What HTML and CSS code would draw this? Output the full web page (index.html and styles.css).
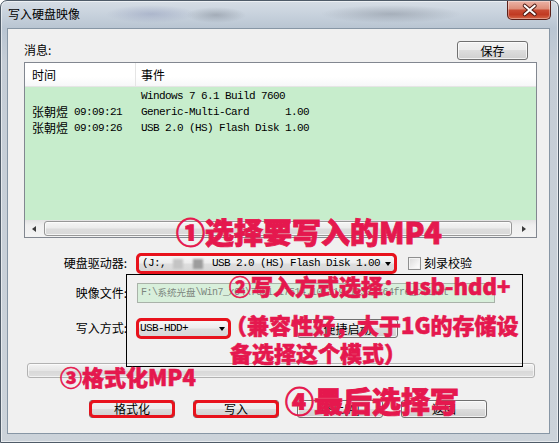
FILE: index.html
```html
<!DOCTYPE html>
<html lang="zh-CN">
<head>
<meta charset="utf-8">
<title>写入硬盘映像</title>
<link rel="stylesheet" href="styles.css">
</head>
<body>
<div class="window">
  <div class="titlebar">
    <span class="title">写入硬盘映像</span>
    <div class="close">
      <svg width="44" height="18" viewBox="0 0 44 18">
        <path d="M17.5 4.5 L28 13.5 M28 4.5 L17.5 13.5" stroke="#4a1710" stroke-width="4.2" stroke-linecap="round"/>
        <path d="M17.5 4.5 L28 13.5 M28 4.5 L17.5 13.5" stroke="#ffffff" stroke-width="2.2" stroke-linecap="round"/>
      </svg>
    </div>
  </div>
  <div class="client">
    <div class="msg-row">
      <span class="msg-label">消息:</span>
      <button class="btn btn-save">保存</button>
    </div>
    <div class="listview">
      <div class="lv-head">
        <div class="lv-c1">时间</div>
        <div class="lv-c2">事件</div>
      </div>
      <div class="lv-body">
        <div class="lv-row"><span class="lv-c1"></span><span class="lv-c2 mono">Windows 7 6.1 Build 7600</span></div>
        <div class="lv-row"><span class="lv-c1"><span class="cjk">张朝煜</span><span class="mono"> 09:09:21</span></span><span class="lv-c2 mono">Generic-Multi-Card      1.00</span></div>
        <div class="lv-row"><span class="lv-c1"><span class="cjk">张朝煜</span><span class="mono"> 09:09:26</span></span><span class="lv-c2 mono">USB 2.0 (HS) Flash Disk 1.00</span></div>
      </div>
      <div class="hscroll">
        <div class="sb-btn sb-left"><i class="tri-l"></i></div>
        <div class="sb-thumb"></div>
        <div class="sb-btn sb-right"><i class="tri-r"></i></div>
      </div>
    </div>
    <div class="frow r1">
      <span class="lbl">硬盘驱动器:</span>
      <div class="combo combo-drive hl">
        <span class="mono">(J:, </span><i class="blur b1"></i><i class="blur b2"></i><span class="mono drive-name">USB 2.0 (HS) Flash Disk 1.00</span>
        <i class="arrow"></i>
      </div>
      <div class="check"><i class="box"></i><span>刻录校验</span></div>
    </div>
    <div class="frow r2">
      <span class="lbl">映像文件:</span>
      <div class="field"><span class="mono-s">F:\</span><span class="cjk-s">系统光盘</span><span class="mono-s">\Win7_x64\7601.17514.101119-1233_x64fre_client</span></div>
    </div>
    <div class="frow r3">
      <span class="lbl">写入方式:</span>
      <div class="combo combo-mode hl">
        <span class="mono">USB-HDD+</span>
        <i class="arrow"></i>
      </div>
      <button class="btn btn-quick">便捷启动</button>
    </div>
    <div class="progress"></div>
    <div class="buttons">
      <button class="btn hl hl-btn">格式化</button>
      <button class="btn hl hl-btn">写入</button>
      <button class="btn">终止[A]</button>
      <button class="btn">返回</button>
    </div>
  </div>

  <div class="blackbox"></div>
  <div class="annot a1">①选择要写入的MP4</div>
  <div class="annot a2">②写入方式选择：usb-hdd+</div>
  <div class="annot a3">（兼容性好，大于1G的存储设</div>
  <div class="annot a4">备选择这个模式）</div>
  <div class="annot a5">③格式化MP4</div>
  <div class="annot a6">④最后选择写</div>
</div>
</body>
</html>
```
FILE: styles.css
```css
* { box-sizing: border-box; margin: 0; padding: 0; }
html, body { width: 559px; height: 443px; overflow: hidden; }
body {
  background: #ffffff;
  font-family: "Noto Sans CJK SC", "Liberation Sans", sans-serif;
  font-size: 12px;
  color: #000;
  line-height: 1.2;
}

.window {
  position: relative;
  width: 559px;
  height: 443px;
  border: 1px solid #4f5b68;
  border-radius: 7px 7px 0 0;
  padding: 0 8px 8px 6px;
  display: flex;
  flex-direction: column;
  background:
    radial-gradient(ellipse 45px 9px at 150px 13px, rgba(150, 160, 190, .55), transparent),
    radial-gradient(ellipse 30px 8px at 215px 14px, rgba(120, 128, 140, .45), transparent),
    radial-gradient(ellipse 70px 9px at 390px 13px, rgba(125, 133, 145, .45), transparent),
    linear-gradient(180deg, #d6dde5 0px, #c8d2dd 13px, #b9c5d2 27px, #c5cdd6 60px, #ccd3da 100%);
  box-shadow: inset 0 0 0 1px rgba(255, 255, 255, .55);
}

.titlebar {
  height: 27px;
  display: flex;
  justify-content: space-between;
  align-items: flex-start;
}
.title { padding: 5px 0 0 1px; line-height: 16px; font-size: 12px; }
.close {
  width: 44px;
  height: 19px;
  margin-right: -1px;
  border: 1px solid #5b2019;
  border-top: none;
  border-radius: 0 0 5px 5px;
  background: linear-gradient(180deg, #ebb3a6 0%, #de8f7b 42%, #c94a32 52%, #c13a22 75%, #d46648 100%);
  box-shadow: inset 0 0 0 1px rgba(255, 255, 255, .35);
  display: flex;
}
.close svg { display: block; }

.client {
  flex: 1;
  background: #f0f0f0;
  border: 1px solid #8796a5;
  display: flex;
  flex-direction: column;
}

.msg-row {
  display: flex;
  align-items: center;
  justify-content: space-between;
  height: 19px;
  margin: 12px 21px 0 16px;
}

.btn {
  font: 12px "Noto Sans CJK SC", "Liberation Sans", sans-serif;
  color: #000;
  border: 1px solid #707070;
  border-radius: 3px;
  background: linear-gradient(180deg, #f2f2f2 0%, #ebebeb 49%, #dddddd 50%, #cfcfcf 100%);
  box-shadow: inset 0 0 0 1px rgba(255, 255, 255, .7);
  display: flex;
  align-items: center;
  justify-content: center;
  line-height: 1;
}
.btn-save { width: 71px; height: 19px; }

.listview {
  margin: 2px 12px 0 16px;
  height: 176px;
  border: 1px solid #828790;
  background: #fff;
  display: flex;
  flex-direction: column;
}
.lv-head {
  height: 24px;
  display: flex;
  border-bottom: 1px solid #e5e5e5;
  background: linear-gradient(180deg, #ffffff 0%, #ffffff 60%, #f6f7f8 100%);
}
.lv-head > div { line-height: 23px; }
.lv-head .lv-c1 { width: 111px; padding-left: 7px; border-right: 1px solid #e5e5e5; }
.lv-head .lv-c2 { padding-left: 5px; }

.lv-body { flex: 1; background: #c7edcc; padding-top: 1px; }
.lv-row { display: flex; height: 16px; line-height: 16px; white-space: pre; }
.lv-row .lv-c1 { width: 111px; padding-left: 7px; display: flex; align-items: center; }
.lv-row .lv-c2 { padding-left: 5px; }

.mono {
  font-family: "Liberation Mono", "Noto Sans CJK SC", monospace;
  font-size: 11px;
  letter-spacing: -0.6px;
  white-space: pre;
}
.cjk { font-size: 12px; letter-spacing: 0; }

.hscroll {
  height: 17px;
  display: flex;
  background: linear-gradient(180deg, #e2e2e2 0%, #efefef 30%, #f3f3f3 100%);
}
.sb-btn { display: flex; align-items: center; justify-content: center; }
.sb-left { width: 18px; }
.sb-right { width: 24px; }
.sb-thumb {
  flex: 1;
  margin: 1px 0 1px 1px;
  border: 1px solid #979797;
  border-radius: 3px;
  background: linear-gradient(180deg, #f5f5f5 0%, #ececec 45%, #dcdcdc 55%, #d9d9d9 100%);
  box-shadow: inset 0 0 0 1px rgba(255, 255, 255, .7);
}
.tri-l { width: 0; height: 0; border-top: 3.5px solid transparent; border-bottom: 3.5px solid transparent; border-right: 4px solid #3a3a3a; }
.tri-r { width: 0; height: 0; border-top: 3.5px solid transparent; border-bottom: 3.5px solid transparent; border-left: 4px solid #3a3a3a; }

.frow { display: flex; align-items: center; }
.r1 { margin-top: 17px; height: 17px; }
.r2 { margin-top: 11px; height: 20px; }
.r3 { margin-top: 16px; height: 19px; }
.lbl { width: 119px; margin-right: 11px; text-align: right; flex: none; }

.combo {
  position: relative;
  display: flex;
  align-items: center;
  height: 17px;
  border: 1px solid #707070;
  border-radius: 3px;
  background: linear-gradient(180deg, #f7f7f7 0%, #ececec 48%, #dedede 52%, #d7d7d7 100%);
  flex: none;
}
.combo-drive { width: 257px; padding-left: 3px; }
.combo-mode { width: 91px; padding-left: 1px; }
.arrow {
  margin-left: auto;
  margin-right: 3px;
  width: 0; height: 0;
  border-left: 3.5px solid transparent;
  border-right: 3.5px solid transparent;
  border-top: 4px solid #000;
}
.blur { display: inline-block; width: 10px; height: 10px; filter: blur(0.8px); }
.b1 { margin-left: 1px; background: #c4c4c4; }
.b2 { margin-left: 10px; background: #9d9d9d; }
.drive-name { margin-left: 9px; }

.hl::after {
  content: "";
  position: absolute;
  inset: -3px;
  border: 3px solid #e8121c;
  border-radius: 5px;
  pointer-events: none;
}
.hl-btn { position: relative; }
.hl-btn::after { inset: -1px; }

.check { display: flex; align-items: center; margin-left: 13px; gap: 3px; }
.box {
  width: 13px; height: 13px;
  border: 1px solid #8e8f8f;
  background: linear-gradient(135deg, #d9d9d9 0%, #f6f6f6 70%, #ffffff 100%);
  box-shadow: inset 0 0 0 1px #f3f3f3;
}

.field {
  width: 358px;
  height: 20px;
  margin-left: -1px;
  border: 1px solid #a9b2a9;
  background: #d8efdb;
  color: #7d867e;
  display: flex;
  align-items: center;
  padding-left: 3px;
  overflow: hidden;
  white-space: nowrap;
}
.mono-s { font-family: "Liberation Mono", monospace; font-size: 10px; letter-spacing: -0.5px; }
.cjk-s { font-size: 9.5px; }

.btn-quick { width: 101px; height: 19px; margin-left: 68px; }

.progress {
  margin: 25px 0 0 19px;
  width: 508px;
  height: 15px;
  border: 1px solid #b2b2b2;
  border-radius: 3px;
  background: linear-gradient(180deg, #f4f4f4 0%, #e6e6e6 50%, #d8d8d8 51%, #dfdfdf 100%);
  box-shadow: inset 0 0 0 1px rgba(255, 255, 255, .6);
}

.buttons { display: flex; gap: 18px; margin-top: 22px; padding-left: 81px; }
.buttons .btn { width: 86px; height: 18px; }

.blackbox {
  position: absolute;
  left: 125px;
  top: 273px;
  width: 397px;
  height: 93px;
  border: 1.5px solid #000;
}

.annot {
  position: absolute;
  color: #e5184e;
  -webkit-text-stroke: 0.6px #e5184e;
  font-family: "Noto Sans CJK SC", sans-serif;
  font-weight: 900;
  line-height: 1;
  white-space: nowrap;
}
.a1 { left: 175px; top: 216px; font-size: 29px; -webkit-text-stroke-width: 0.9px; }
.a2 { left: 228px; top: 273px; font-size: 22px; }
.a3 { left: 224px; top: 312px; font-size: 22px; }
.a4 { left: 229px; top: 340px; font-size: 22px; }
.a5 { left: 59px; top: 364px; font-size: 22px; }
.a6 { left: 284px; top: 385px; font-size: 29px; -webkit-text-stroke-width: 0.9px; }
```
